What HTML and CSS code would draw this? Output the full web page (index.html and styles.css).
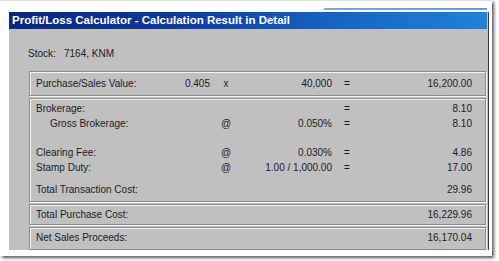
FILE: index.html
```html
<!DOCTYPE html>
<html>
<head>
<meta charset="utf-8">
<link rel="stylesheet" href="styles.css">
</head>
<body>
<div class="card">
  <div class="window">
    <div class="titlebar">Profit/Loss Calculator - Calculation Result in Detail</div>
    <div class="content">
      <div class="stock"><span class="stock-label">Stock:</span><span>7164, KNM</span></div>
      <div class="box box-purchase">
        <div class="row">
          <span class="lbl">Purchase/Sales Value:</span>
          <span class="num">0.405</span>
          <span class="op">x</span>
          <span class="amt">40,000</span>
          <span class="eq">=</span>
          <span class="val">16,200.00</span>
        </div>
      </div>
      <div class="box box-costs">
        <div class="row">
          <span class="lbl">Brokerage:</span>
          <span class="num"></span><span class="op"></span><span class="amt"></span>
          <span class="eq">=</span>
          <span class="val">8.10</span>
        </div>
        <div class="row">
          <span class="lbl indent">Gross Brokerage:</span>
          <span class="num"></span>
          <span class="op">@</span>
          <span class="amt">0.050%</span>
          <span class="eq">=</span>
          <span class="val">8.10</span>
        </div>
        <div class="row blank"></div>
        <div class="row">
          <span class="lbl">Clearing Fee:</span>
          <span class="num"></span>
          <span class="op">@</span>
          <span class="amt">0.030%</span>
          <span class="eq">=</span>
          <span class="val">4.86</span>
        </div>
        <div class="row">
          <span class="lbl">Stamp Duty:</span>
          <span class="num"></span>
          <span class="op">@</span>
          <span class="amt">1.00 / 1,000.00</span>
          <span class="eq">=</span>
          <span class="val">17.00</span>
        </div>
        <div class="row total">
          <span class="lbl">Total Transaction Cost:</span>
          <span class="num"></span><span class="op"></span><span class="amt"></span><span class="eq"></span>
          <span class="val">29.96</span>
        </div>
      </div>
      <div class="box box-single">
        <div class="row">
          <span class="lbl">Total Purchase Cost:</span>
          <span class="num"></span><span class="op"></span><span class="amt"></span><span class="eq"></span>
          <span class="val">16,229.96</span>
        </div>
      </div>
      <div class="box box-net">
        <div class="row">
          <span class="lbl">Net Sales Proceeds:</span>
          <span class="num"></span><span class="op"></span><span class="amt"></span><span class="eq"></span>
          <span class="val">16,170.04</span>
        </div>
      </div>
    </div>
  </div>
</div>
</body>
</html>
```
FILE: styles.css
```css
html, body {
  margin: 0;
  padding: 0;
  background: #ffffff;
  width: 499px;
  height: 261px;
  overflow: hidden;
}

.card {
  width: 492px;
  height: 256px;
  background: #ffffff;
  box-sizing: border-box;
  padding: 11px 0 0 9px;
  border-top: 1px solid #dcdcdc;
  box-shadow: 2px 2px 3px rgba(0, 0, 0, 0.65);
  font-family: "Liberation Sans", Arial, sans-serif;
}

.window {
  position: relative;
  width: 479px;
  height: 238px;
  background: #c0c0c0;
  border-right: 1px solid #404040;
  display: flex;
  flex-direction: column;
}

.window::before {
  content: "";
  position: absolute;
  top: -4px;
  left: 315px;
  width: 163px;
  height: 2px;
  background: linear-gradient(to right, #5a90d8, #3a7fd0);
  opacity: 0.8;
}

.titlebar {
  height: 17px;
  line-height: 17px;
  padding-left: 3px;
  margin-right: 1px;
  background: linear-gradient(to right, #0a2680 0%, #0d3a9e 35%, #1766c4 70%, #1f82d8 100%);
  color: #ffffff;
  font-weight: bold;
  font-size: 11.5px;
  white-space: nowrap;
}

.content {
  padding: 19px 0 0 19px;
  color: #1c1c1c;
  font-size: 10px;
}

.stock {
  height: 12px;
  line-height: 12px;
  margin-bottom: 11px;
}

.stock-label {
  display: inline-block;
  width: 36px;
}

.box {
  margin-left: 1px;
  width: 457px;
  box-sizing: border-box;
  border: 1px solid #8c8c8c;
  box-shadow: inset 1px 1px 0 #f4f4f4, 1px 1px 0 #f4f4f4;
  padding: 0 13px 0 6px;
  margin-bottom: 2px;
}

.box-purchase { padding-top: 4px; height: 25px; }
.box-costs { padding-top: 2px; height: 104px; }
.box-single { padding-top: 2px; height: 21px; }
.box-net { padding-top: 2px; height: 23px; }

.row {
  display: grid;
  grid-template-columns: 130px 44px 32px 90px 30px 1fr;
  height: 15px;
  line-height: 15px;
  white-space: nowrap;
}

.row.blank { height: 14px; }
.row.total { margin-top: 7px; }

.lbl { text-align: left; }
.lbl.indent { padding-left: 14px; }
.num, .amt, .val { text-align: right; }
.op, .eq { text-align: center; }
```
